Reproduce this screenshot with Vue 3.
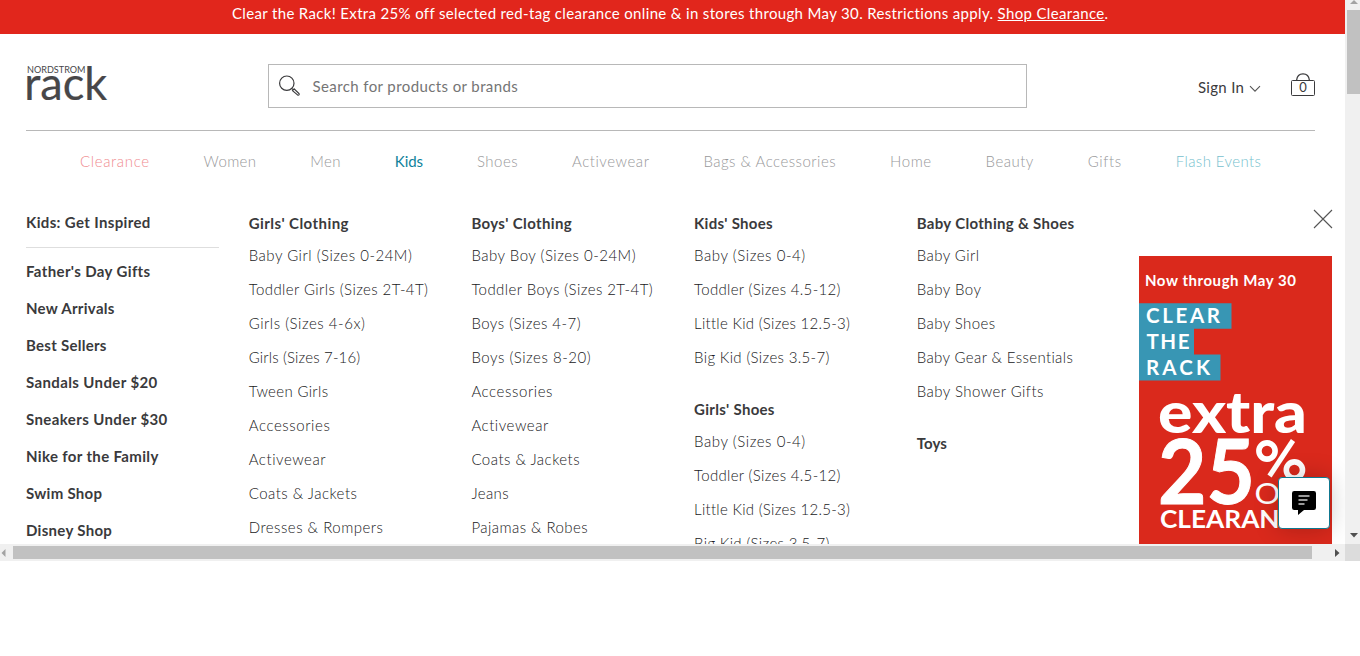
<script setup>
// Spreads letters so that a label takes the given width in pixels.
const vFit = {
  mounted(el, { value }) {
    if (!value) return
    const natural = el.getBoundingClientRect().width
    const count = el.textContent.trim().length
    el.style.letterSpacing = (value - 0.3 - natural) / count + 'px'
  }
}

const nav = [
  ['Clearance', 70, 'sale'], ['Women', 53], ['Men', 31], ['Kids', 28.5, 'active'], ['Shoes', 41.5],
  ['Activewear', 78], ['Bags & Accessories', 133], ['Home', 42], ['Beauty', 48.5],
  ['Gifts', 34], ['Flash Events', 86, 'flash']
]

const featured = [
  ["Father's Day Gifts", 124.5], ['New Arrivals', 89], ['Best Sellers', 81], ['Sandals Under $20', 132],
  ['Sneakers Under $30', 142], ['Nike for the Family', 133], ['Swim Shop', 76.5], ['Disney Shop', 86.5]
]

const columns = [
  [{
    title: ["Girls' Clothing", 100.5],
    items: [['Baby Girl (Sizes 0-24M)', 164], ['Toddler Girls (Sizes 2T-4T)', 180], ['Girls (Sizes 4-6x)', 117],
      ['Girls (Sizes 7-16)', 112], ['Tween Girls', 80], ['Accessories', 82], ['Activewear', 78],
      ['Coats & Jackets', 109], ['Dresses & Rompers', 135]]
  }],
  [{
    title: ["Boys' Clothing", 101],
    items: [['Baby Boy (Sizes 0-24M)', 165], ['Toddler Boys (Sizes 2T-4T)', 182], ['Boys (Sizes 4-7)', 110],
      ['Boys (Sizes 8-20)', 120], ['Accessories', 82], ['Activewear', 78], ['Coats & Jackets', 109],
      ['Jeans', 38], ['Pajamas & Robes', 117]]
  }],
  [{
    title: ["Kids' Shoes", 79],
    items: [['Baby (Sizes 0-4)', 112], ['Toddler (Sizes 4.5-12)', 147], ['Little Kid (Sizes 12.5-3)', 156], ['Big Kid (Sizes 3.5-7)', 136]]
  }, {
    title: ["Girls' Shoes", 81],
    items: [['Baby (Sizes 0-4)', 112], ['Toddler (Sizes 4.5-12)', 147], ['Little Kid (Sizes 12.5-3)', 156], ['Big Kid (Sizes 3.5-7)', 136]]
  }],
  [{
    title: ['Baby Clothing & Shoes', 158],
    items: [['Baby Girl', 63], ['Baby Boy', 65], ['Baby Shoes', 79], ['Baby Gear & Essentials', 157], ['Baby Shower Gifts', 127]]
  }, { title: ['Toys', 30.5], items: [] }]
]
</script>

<template>
  <div class="window">
    <div class="page">
      <div class="banner">
        <span v-fit="876.5">Clear the Rack! Extra 25% off selected red-tag clearance online &amp; in stores through May 30. Restrictions apply. <a>Shop Clearance</a>.</span>
      </div>

      <header class="header">
        <svg class="logo" width="82" height="40" viewBox="0 0 82 40">
          <text class="logo-top" x="1" y="9.8" textLength="58.5" lengthAdjust="spacingAndGlyphs">NORDSTROM</text>
          <text class="logo-main" x="-1.800" y="37" textLength="83" lengthAdjust="spacingAndGlyphs">rack</text>
        </svg>
        <div class="search">
          <svg width="22" height="22" viewBox="0 0 22 22" fill="none" stroke="#3a3a3c">
            <circle cx="7.8" cy="8.2" r="7.2" stroke-width="1.2" />
            <path d="M12.900 13.6l1.4 1.2M13.500 15.6l1.6-1.7 4.8 4.6c.5.5.5 1 .1 1.4s-1 .4-1.5-.1z" stroke-width="1.1" />
          </svg>
          <span v-fit="206">Search for products or brands</span>
        </div>
        <div class="account">
          <span v-fit="46.5">Sign In</span>
          <svg width="12" height="8" viewBox="0 0 12 8" fill="none" stroke="#555"><path d="M1 1.2l5 5 5-5" stroke-width="1.1" /></svg>
        </div>
        <div class="bag">
          <svg width="24" height="24" viewBox="0 0 24 24" fill="none" stroke="#3a3a3c">
            <rect x=".5" y="7.5" width="23" height="15" rx="1" />
            <path d="M5.6 7.2C6 3.2 8.4.8 12 .8s6 2.4 6.4 6.4" stroke-width="1.3" />
            <text x="12" y="19.3" text-anchor="middle">0</text>
          </svg>
        </div>
      </header>

      <nav class="nav">
        <span v-for="[label, w, kind] in nav" :key="label" v-fit="w" :class="kind">{{ label }}</span>
      </nav>

      <div class="menu">
        <div class="featured">
          <div class="lead"><span v-fit="125">Kids: Get Inspired</span></div>
          <div v-for="[label, w] in featured" :key="label" class="feature"><span v-fit="w">{{ label }}</span></div>
        </div>
        <div v-for="(groups, c) in columns" :key="c" class="column">
          <section v-for="g in groups" :key="g.title[0]" class="group">
            <div class="title"><span v-fit="g.title[1]">{{ g.title[0] }}</span></div>
            <div v-for="[label, w] in g.items" :key="label" class="item"><span v-fit="w">{{ label }}</span></div>
          </section>
        </div>
        <div class="aside">
          <svg class="close" width="20" height="20" viewBox="0 0 20 20" stroke="#555" stroke-width="1.1"><path d="M1 1l18 18M19 1L1 19" /></svg>
          <svg class="promo" width="193" height="300" viewBox="0 0 193 300" fill="#fff">
            <rect width="193" height="300" fill="#da291c" />
            <path d="M0 47.2h92.5v25.6H55v25.6h26.5v26.2H0z" fill="#3896b4" />
            <text x="6" y="30.3" font-size="15" font-weight="700" textLength="151">Now through May 30</text>
            <text x="7" y="67.4" font-size="20.500" font-weight="700" textLength="74">CLEAR</text>
            <text x="7.5" y="93" font-size="20.500" font-weight="700" textLength="43">THE</text>
            <text x="7" y="118.800" font-size="20.500" font-weight="700" textLength="64">RACK</text>
            <text x="19" y="177" font-size="58" font-weight="900" textLength="149" lengthAdjust="spacingAndGlyphs">extra</text>
            <text x="19" y="248" font-size="90" font-weight="700" stroke="#fff" stroke-width="1" textLength="97" lengthAdjust="spacingAndGlyphs">25</text>
            <g fill="none" stroke="#fff">
              <circle cx="128" cy="195" r="8.1" stroke-width="5.6" />
              <circle cx="155.4" cy="214" r="8.1" stroke-width="5.6" />
              <path d="M154 184.5L130.5 220" stroke-width="5" />
            </g>
            <text x="115.5" y="248" font-size="28" textLength="62" lengthAdjust="spacingAndGlyphs">OFF</text>
            <text x="21" y="271.5" font-size="24" font-weight="700" textLength="152" lengthAdjust="spacingAndGlyphs">CLEARANCE</text>
          </svg>
        </div>
      </div>

      <button class="chat" aria-label="Chat">
        <svg width="24" height="24" viewBox="0 0 24 24">
          <path d="M2.2 0h19.6Q24 0 24 2.2v14.6q0 2.2-2.2 2.2H12l-6 5v-5H2.2Q0 19 0 16.800V2.200Q0 0 2.200 0z" />
          <path d="M6.500 5h11M6.500 9h9M6.500 13h6" stroke="#999" stroke-width="1.800" />
        </svg>
      </button>
    </div>
    <div class="vbar">
      <svg class="up" width="8" height="4" viewBox="0 0 8 4"><path d="M0 4l4-4 4 4z" fill="#a3a3a3" /></svg>
      <i></i>
      <svg class="down" width="8" height="5" viewBox="0 0 8 5"><path d="M0 0h8L4 4.500z" fill="#505050" /></svg>
    </div>
    <div class="hbar">
      <svg width="5" height="8" viewBox="0 0 5 8"><path d="M4.500 0v8L.5 4z" fill="#a3a3a3" /></svg>
      <i></i>
      <svg width="5" height="8" viewBox="0 0 5 8"><path d="M0 0v8l4.500-4z" fill="#505050" /></svg>
    </div>
    <div class="corner"></div>
  </div>
</template>

<style>
body { background: #fff; overflow: hidden; }
</style>

<style scoped>
.window {
  display: grid;
  grid-template: 544px 17px / 1345px 15px;
  width: 1360px;
  font: 400 15px Lato, sans-serif;
  color: #3a3a3c;
  white-space: nowrap;
}
.page { position: relative; overflow: hidden; }
.banner {
  height: 34px;
  box-sizing: border-box;
  padding-left: 232px;
  line-height: 26px;
  background: #e1261c;
  color: #fff;
}
.banner a { text-decoration: underline; }
.header {
  display: flex;
  height: 96px;
  margin: 0 30px 0 26px;
  border-bottom: 1px solid #b8b8b8;
}
.logo { margin-top: 29px; fill: #474749; overflow: visible; }
.logo-top { font-size: 9px; }
.logo-main { font-size: 46px; stroke: #474749; stroke-width: .2px; }
.search {
  display: flex;
  align-items: center;
  box-sizing: border-box;
  width: 759px;
  height: 44px;
  margin: 30px 0 0 160px;
  padding-left: 10px;
  border: 1px solid #b8b8b8;
  color: #757575;
}
.search span { margin-left: 11.500px; }
.account { display: flex; align-items: center; height: 28px; margin: 39px 0 0 171px; }
.account svg { margin: 4px 0 0 4.500px; }
.bag { margin: 39px 0 0 30px; }
.bag svg { display: block; }
.bag text { font-size: 13px; fill: #3a3a3c; stroke: none; }
.nav {
  display: flex;
  justify-content: space-between;
  margin: 20px 83.500px 0 80px;
  line-height: 20px;
  font-weight: 300;
  color: #98989a;
}
.nav .sale { color: #f08c90; }
.nav .active { color: #0f829b; font-weight: 400; }
.nav .flash { color: #76bfce; }
.menu {
  display: grid;
  grid-template-columns: repeat(6, 193px);
  column-gap: 29.700px;
  margin: 37px 0 0 26px;
}
.lead, .feature, .title { font-weight: 700; }
.lead { height: 39px; line-height: 28px; border-bottom: 1px solid #dedede; margin-bottom: 5px; }
.feature { height: 37px; line-height: 37px; }
.title { height: 30px; line-height: 30px; }
.item { height: 34px; line-height: 34px; font-weight: 300; color: #202022; }
.group { margin-bottom: 20px; }
.aside { display: flex; flex-direction: column; align-items: flex-end; }
.close { margin: 1px -1px 0 0; }
.promo { margin-top: 27px; }
.chat {
  position: absolute;
  left: 1278px;
  top: 477px;
  width: 52px;
  height: 52px;
  padding: 0;
  display: grid;
  place-items: center;
  border: 1px solid #0f7890;
  border-radius: 4px;
  background: #fff;
  box-shadow: 0 0 24px rgba(0, 0, 0, .22);
}
.vbar { display: flex; flex-direction: column; align-items: center; background: #f0f0f0; }
.vbar i { width: 13px; height: 84px; margin: 6px 0 0 2px; background: #c1c1c1; }
.vbar .down { margin: auto 0 6px 2px; }
.vbar .up { margin-left: 2px; }
.hbar { display: flex; align-items: center; background: #f0f0f0; }
.hbar svg:first-child { margin-left: 1px; }
.hbar i { width: 1299px; height: 13px; margin: 0 23px 0 7px; background: #c1c1c1; }
.corner { background: #dcdcdc; }
</style>
